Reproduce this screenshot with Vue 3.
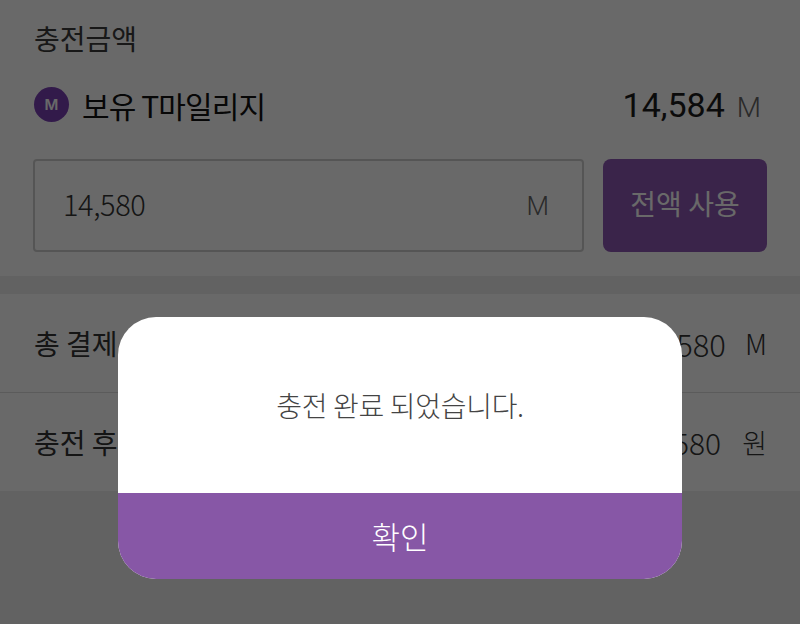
<script setup>
const rows = [
  { label: '총 결제 금액', value: '14,580', unit: 'M', cls: 'row-m' },
  { label: '충전 후 잔액', value: '14,580', unit: '원', cls: 'row-w' }
]
</script>

<template>
  <div class="page">
    <section class="charge">
      <h2 class="title">충전금액</h2>
      <div class="owned">
        <span class="badge"><span>M</span></span>
        <span class="owned-label">보유 T마일리지</span>
        <span class="owned-value">14,584</span>
        <span class="owned-unit">M</span>
      </div>
      <div class="input-row">
        <div class="input">
          <span class="input-value">14,580</span>
          <span class="input-unit">M</span>
        </div>
        <button class="all">전액 사용</button>
      </div>
    </section>
    <section class="summary">
      <div v-for="r in rows" :key="r.label" class="row" :class="r.cls">
        <span class="row-label">{{ r.label }}</span>
        <span class="row-value">{{ r.value }}</span>
        <span class="row-unit">{{ r.unit }}</span>
      </div>
    </section>
    <div class="rest"></div>
    <div class="overlay">
      <div class="dialog">
        <p class="message">충전 완료 되었습니다.</p>
        <button class="ok">확인</button>
      </div>
    </div>
  </div>
</template>

<style scoped>
.page {
  position: relative;
  width: 800px;
  height: 624px;
  overflow: hidden;
  display: flex;
  flex-direction: column;
  background: #efefef;
  font-family: "Noto Sans CJK KR", "Noto Sans", sans-serif;
  color: #222;
}
.charge {
  height: 276px;
  box-sizing: border-box;
  padding: 18px 33px 0 33px;
  background: #fff;
  flex: none;
}
.title {
  margin: 0;
  font-size: 28px;
  line-height: 40px;
  font-weight: 400;
  color: #3c3c3c;
  padding-left: 1px;
}
.owned {
  display: flex;
  align-items: center;
  margin-top: 21px;
  height: 50px;
  padding-left: 1px;
}
.badge {
  width: 35px;
  height: 35px;
  border-radius: 50%;
  background: #7b3fb5;
  display: flex;
  align-items: center;
  justify-content: center;
  color: #fff;
  font-family: Inter, sans-serif;
  font-weight: 600;
  font-size: 15px;
}
.owned-label {
  margin-left: 13px;
  padding-top: 2px;
  font-size: 30px;
  letter-spacing: -0.9px;
  font-weight: 400;
  color: #111;
  flex: 1;
}
.owned-value {
  font-family: Roboto, sans-serif;
  font-size: 34px;
  padding-top: 2px;
  color: #1c1c1c;
}
.owned-unit {
  font-family: Roboto, sans-serif;
  font-size: 28px;
  font-weight: 300;
  color: #666;
  margin-left: 12px;
  margin-right: 6px;
  padding-top: 6px;
}
.input-row {
  display: flex;
  margin-top: 30px;
  gap: 19px;
}
.input {
  width: 551px;
  height: 93px;
  box-sizing: border-box;
  border: 2px solid #cfcfcf;
  border-radius: 4px;
  display: flex;
  align-items: center;
  justify-content: space-between;
  padding: 0 33px 0 28px;
}
.input-value {
  font-size: 29px;
  font-weight: 300;
  color: #333;
  letter-spacing: -0.4px;
  margin-bottom: 5px;
}
.input-unit {
  font-family: Roboto, sans-serif;
  font-size: 26px;
  font-weight: 300;
  color: #666;
}
.all {
  width: 164px;
  height: 93px;
  border: 0;
  border-radius: 8px;
  background: #8d57b3;
  color: #fff;
  font-family: inherit;
  font-size: 28px;
  padding: 0 0 5px;
}
.summary {
  margin-top: 18px;
  background: #fff;
  flex: none;
}
.row {
  height: 98px;
  box-sizing: border-box;
  display: flex;
  align-items: center;
  padding: 0 33px 0 34px;
}
.row + .row {
  height: 99px;
  border-top: 1px solid #dcdcdc;
}
.row-label {
  font-size: 28px;
  font-weight: 400;
  color: #333;
  flex: 1;
}
.row-value {
  font-size: 30px;
  font-weight: 300;
  color: #333;
}
.row-unit {
  font-size: 27px;
  font-weight: 300;
  color: #333;
  margin-left: 20px;
}
.row-m .row-unit { font-size: 28px; margin-left: 19px; }
.row-m .row-value { font-size: 31px; }
.row-w .row-unit { margin-left: 21px; }
.rest {
  flex: 1;
}
.overlay {
  position: absolute;
  inset: 0;
  background: rgba(0, 0, 0, 0.59);
}
.dialog {
  position: absolute;
  left: 118px;
  top: 317px;
  width: 564px;
  height: 262px;
  border-radius: 38px;
  overflow: hidden;
  background: #fff;
  display: flex;
  flex-direction: column;
}
.message {
  margin: 0;
  flex: 1;
  display: flex;
  align-items: center;
  justify-content: center;
  font-size: 28px;
  font-weight: 300;
  letter-spacing: -0.3px;
  color: #444;
}
.ok {
  height: 86px;
  border: 0;
  padding: 0 0 2px;
  background: #8757a6;
  color: #fff;
  font-family: inherit;
  font-size: 31px;
  font-weight: 300;
}
</style>
